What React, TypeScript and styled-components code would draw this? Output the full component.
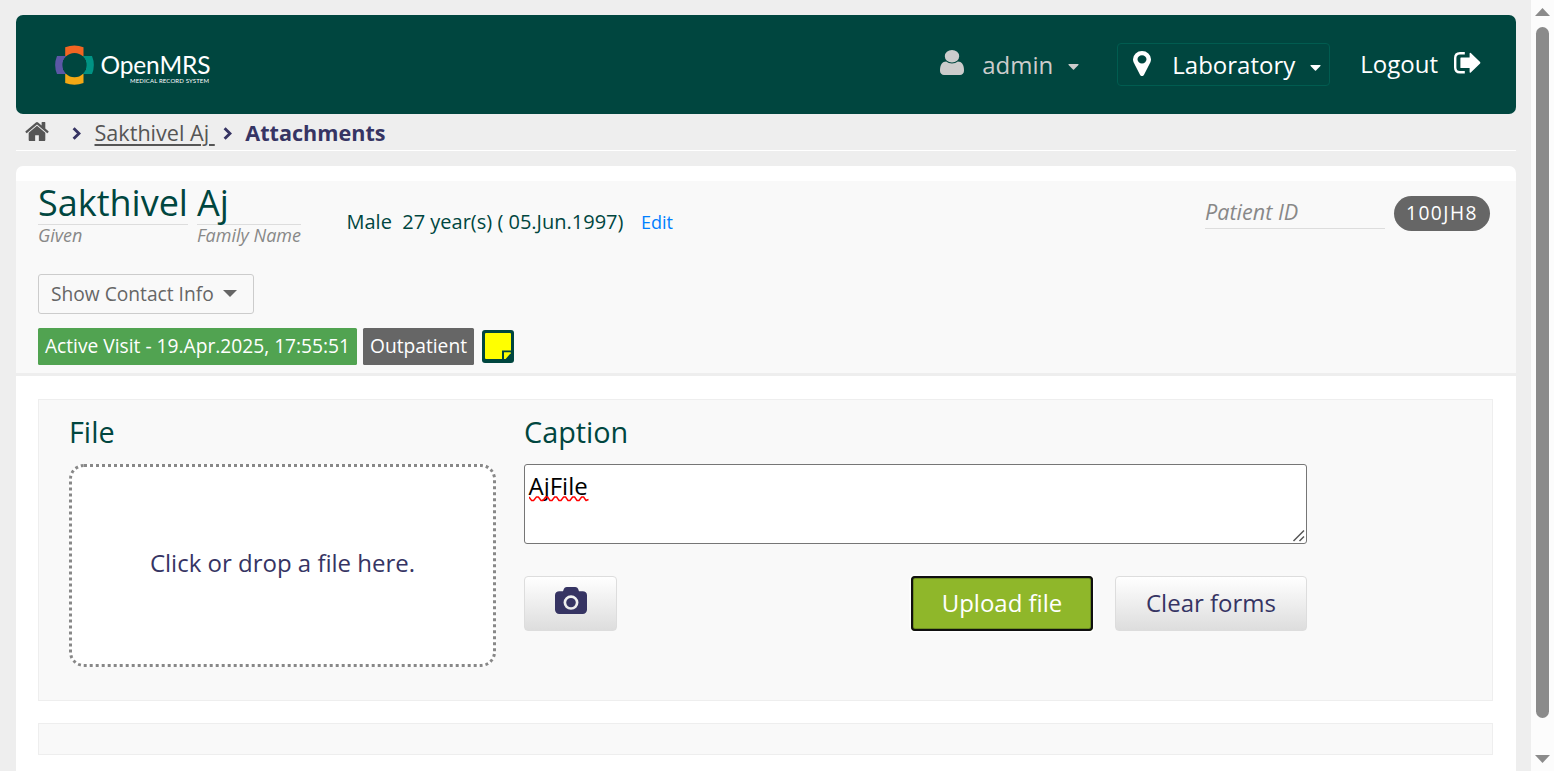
import React from "react";
import styled, { createGlobalStyle } from "styled-components";

const GlobalStyle = createGlobalStyle`
  * { box-sizing: border-box; }
  html, body { margin: 0; padding: 0; height: 100%; overflow: hidden; }
  body {
    background: #eeeeee;
    font-family: "Open Sans", "Noto Sans", sans-serif;
    font-size: 24px;
    line-height: 33px;
    color: #363463;
  }
`;

const Viewport = styled.div`
  display: flex;
  height: 771px;
  width: 1554px;
  overflow: hidden;
`;

const Page = styled.div`
  flex: 1;
  padding: 15px 15px 0 16px;
  display: flex;
  flex-direction: column;
  overflow: hidden;
`;

const Header = styled.header`
  flex: none;
  height: 99px;
  border-radius: 7px;
  background: #00463f;
  display: flex;
  align-items: flex-start;
  padding: 28px 35px 0 38px;
  color: #fff;
`;

const LogoSvg = styled.svg`
  display: block;
  margin-right: auto;
`;

const UserMenu = styled.div`
  display: flex;
  align-items: center;
  height: 43px;
  color: #cccccc;
  padding-right: 38px;
`;

const LocationMenu = styled.div`
  display: flex;
  align-items: center;
  width: 213px;
  height: 43px;
  border: 1px solid #015c50;
  border-radius: 4px;
  padding: 0 8px 0 15px;
`;

const LogoutLink = styled.div`
  display: flex;
  align-items: center;
  height: 41px;
  margin-left: 30px;
  white-space: nowrap;
`;

const NavLabel = styled.span<{ $left?: number; $right?: number }>`
  margin-left: ${(p) => p.$left ?? 0}px;
  margin-right: ${(p) => p.$right ?? 0}px;
`;

const Icon = styled.svg<{ $lift?: number; $color?: string }>`
  display: block;
  flex: none;
  fill: ${(p) => p.$color ?? "currentColor"};
  margin-bottom: ${(p) => p.$lift ?? 0}px;
`;

const Caret = styled.i<{ $size: number; $drop?: number }>`
  width: 0;
  height: 0;
  border-left: ${(p) => p.$size}px solid transparent;
  border-right: ${(p) => p.$size}px solid transparent;
  border-top: ${(p) => p.$size}px solid currentColor;
  margin-top: ${(p) => p.$drop ?? 0}px;
`;

const MenuCaret = styled.svg<{ $drop: number }>`
  display: block;
  flex: none;
  fill: currentColor;
  margin-top: ${(p) => p.$drop}px;
`;

const Breadcrumbs = styled.nav`
  flex: none;
  height: 37px;
  display: flex;
  align-items: center;
  border-bottom: 1px solid #fff;
  padding: 1px 0 0 9px;
  font-size: 21.6px;
  color: #363463;
`;

const CrumbChevron = styled.svg<{ $left?: number }>`
  display: block;
  flex: none;
  margin: 2px 0 0 ${(p) => p.$left ?? 0}px;
  fill: none;
  stroke: currentColor;
  stroke-width: 2.9;
`;

const CrumbLink = styled.a`
  color: #555555;
  text-decoration: underline;
  text-decoration-thickness: 1.5px;
  text-underline-offset: 3px;
  white-space: pre;
  margin: 0 8.5px 0 13.5px;
`;

const CrumbCurrent = styled.b`
  margin-left: 13px;
`;

const Card = styled.main`
  flex: 1;
  margin-top: 15px;
  padding-top: 15px;
  background: #fff;
  border-radius: 7px 7px 0 0;
`;

const PatientHeader = styled.section`
  height: 195px;
  background: #f9f9f9;
  border-bottom: 3px solid #eeeeee;
  padding: 0 26px 0 22px;
  color: #00463f;
`;

const Demographics = styled.div`
  display: flex;
  height: 93px;
`;

const NamePart = styled.div`
  margin-right: 9px;
`;

const NameValue = styled.div`
  height: 44px;
  line-height: 44px;
  font-size: 36px;
  border-bottom: 1px solid #dddddd;
`;

const NameLabel = styled.div`
  font-size: 18px;
  line-height: 21px;
  font-style: italic;
  color: #888888;
`;

const Vitals = styled.div`
  margin: 24px auto 0 36.5px;
  font-size: 20px;
  white-space: pre;
`;

const EditLink = styled.a`
  margin-left: 17.5px;
  font-size: 18px;
  color: #007fff;
`;

const IdLabel = styled.div`
  width: 180px;
  height: 33px;
  line-height: 31px;
  margin: 15px 9px 0 0;
  border-bottom: 1px solid #dddddd;
  font-size: 21.6px;
  font-style: italic;
  color: #888888;
`;

const IdBadge = styled.div`
  width: 96px;
  height: 35px;
  margin-top: 15px;
  border-radius: 18px;
  background: #666666;
  color: #fff;
  font-size: 19.2px;
  line-height: 34px;
  letter-spacing: 1.5px;
  text-align: center;
`;

const ContactToggle = styled.div`
  display: flex;
  align-items: center;
  width: 216px;
  height: 40px;
  border: 1px solid #cccccc;
  border-radius: 3px;
  padding: 0 0 2px 12px;
  font-size: 19.2px;
  color: #666666;
  gap: 9px;
  white-space: nowrap;
`;

const Tags = styled.div`
  display: flex;
  margin-top: 14px;
`;

const Tag = styled.span<{ $bg: string; $width: number }>`
  width: ${(p) => p.$width}px;
  height: 37px;
  line-height: 36px;
  margin-right: 6px;
  border-radius: 1.5px;
  background: ${(p) => p.$bg};
  color: #fff;
  font-size: 19.2px;
  text-align: center;
  white-space: nowrap;
`;

const NoteIcon = styled.svg`
  display: block;
  margin: 2px 0 0 2px;
`;

const Panel = styled.section<{ $height: number; $top: number }>`
  height: ${(p) => p.$height}px;
  margin: ${(p) => p.$top}px 23px 0 22px;
  border: 1px solid #eeeeee;
  background: #f9f9f9;
  display: flex;
  padding: 12px 30px;
`;

const FileColumn = styled.div`
  width: 427px;
  margin-right: 28px;
`;

const CaptionColumn = styled.div`
  width: 783px;
`;

const Heading = styled.h3`
  margin: 0 0 13px;
  font-size: 28.8px;
  font-weight: 400;
  line-height: 39px;
  color: #00463f;
`;

const DropZone = styled.div`
  display: flex;
  align-items: center;
  justify-content: center;
  height: 203px;
  padding-bottom: 6px;
  border: 3px dotted #888888;
  border-radius: 15px;
  background: #fff;
`;

const CaptionInput = styled.div`
  position: relative;
  height: 80px;
  border: 1px solid #767676;
  border-radius: 3px;
  background: #fff;
  color: #000;
  padding: 4px 3.5px;
`;

const Misspelled = styled.svg`
  position: absolute;
  left: 3.5px;
  top: 30px;
`;

const ResizeGrip = styled.svg`
  position: absolute;
  right: 1px;
  bottom: 1px;
`;

const Actions = styled.div`
  display: flex;
  margin-top: 32px;
`;

const Button = styled.button<{ $width: number; $primary?: boolean }>`
  width: ${(p) => p.$width}px;
  height: 55px;
  padding: 0 0 2px;
  display: flex;
  align-items: center;
  justify-content: center;
  border: 1px solid ${(p) => (p.$primary ? "#6f8f21" : "#dddddd")};
  border-radius: 4px;
  background: ${(p) => (p.$primary ? "#8fb72a" : "linear-gradient(#ffffff, #dddddd)")};
  box-shadow: ${(p) => (p.$primary ? "inset 0 0 0 2px #6f8f21, 0 0 0 1.5px #ffffff" : "none")};
  outline: ${(p) => (p.$primary ? "2px solid #101010" : "none")};
  outline-offset: -2px;
  font: inherit;
  color: ${(p) => (p.$primary ? "#ffffff" : "#363463")};
`;

const ActionGroup = styled.div`
  display: flex;
  gap: 22px;
  margin-left: auto;
`;

const Scrollbar = styled.aside`
  width: 23px;
  background: #fcfcfc;
  display: flex;
  flex-direction: column;
  align-items: center;
  color: #8b8b8b;
  padding: 8px 0 8px;
`;

const Thumb = styled.div`
  width: 13px;
  height: 691px;
  margin: 11px 0 auto;
  border-radius: 7px;
  background: #8b8b8b;
`;

/* Glyph outlines use a 1792-unit em with the y axis pointing up. */
const glyphs = {
  user: { box: "0 -1408 1280 1536", d: "M1280 137q0 -109 -62.5 -187t-150.5 -78h-854q-88 0 -150.5 78t-62.5 187q0 85 8.5 160.5t31.5 152t58.5 131t94 89t134.5 34.5q131 -128 313 -128t313 128q76 0 134.5 -34.5t94 -89t58.5 -131t31.5 -152t8.5 -160.5zM1024 1024q0 -159 -112.5 -271.5t-271.5 -112.5t-271.5 112.5t-112.5 271.5t112.5 271.5t271.5 112.5t271.5 -112.5t112.5 -271.5z" },
  marker: { box: "0 -1408 1024 1536", d: "M768 896q0 106 -75 181t-181 75t-181 -75t-75 -181t75 -181t181 -75t181 75t75 181zM1024 896q0 -109 -33 -179l-364 -774q-16 -33 -47.5 -52t-67.5 -19t-67.5 19t-46.5 52l-365 774q-33 70 -33 179q0 212 150 362t362 150t362 -150t150 -362z" },
  home: { box: "0 -1283 1664 1283", d: "M1408 544v-480q0 -26 -19 -45t-45 -19h-384v384h-256v-384h-384q-26 0 -45 19t-19 45v480q0 1 .5 3t.5 3l575 474l575 -474q1 -2 1 -6zM1631 613l-62 -74q-8 -9 -21 -11h-3q-13 0 -21 7l-692 577l-692 -577q-12 -8 -24 -7q-13 2 -21 11l-62 74q-8 10 -7 23.5t11 21.5l719 599q32 26 76 26t76 -26l244 -204v195q0 14 9 23t23 9h192q14 0 23 -9t9 -23v-408l219 -182q10 -8 11 -21.5t-7 -23.5z" },
  camera: { box: "0 -1536 1920 1664", d: "M960 864q119 0 203.5 -84.5t84.5 -203.5t-84.5 -203.5t-203.5 -84.5t-203.5 84.5t-84.5 203.5t84.5 203.5t203.5 84.5zM1664 1280q106 0 181 -75t75 -181v-896q0 -106 -75 -181t-181 -75h-1408q-106 0 -181 75t-75 181v896q0 106 75 181t181 75h224l51 136q19 49 69.5 84.5t103.5 35.5h512q53 0 103.5 -35.5t69.5 -84.5l51 -136h224zM960 128q185 0 316.5 131.5t131.5 316.5t-131.5 316.5t-316.5 131.5t-316.5 -131.5t-131.5 -316.5t131.5 -316.5t316.5 -131.5z" },
};

function Glyph(props: { name: keyof typeof glyphs; w: number; h: number; lift?: number; color?: string }) {
  const g = glyphs[props.name];
  return (
    <Icon width={props.w} height={props.h} viewBox={g.box} preserveAspectRatio="none" $lift={props.lift} $color={props.color}>
      <path transform="scale(1 -1)" d={g.d} />
    </Icon>
  );
}

function SignOut() {
  return (
    <Icon width="27" height="22" viewBox="0 0 27 22" $lift={2}>
      <path d="M10.8 1.2 H6 Q1.2 1.2 1.2 6 V15.5 Q1.2 20.3 6 20.3 H10.8" fill="none" stroke="currentColor" strokeWidth="2.4" />
      <path d="M7 5.6 H15.6 V1.3 Q15.8 0.5 16.8 1.1 L26.1 10 Q26.7 10.7 26.1 11.4 L16.8 20.4 Q15.8 21 15.6 20.2 V16 H7 Q6.4 16 6.4 15.4 V6.2 Q6.4 5.6 7 5.6Z" />
    </Icon>
  );
}

function Chevron({ left }: { left?: number }) {
  return (
    <CrumbChevron width="9" height="13" viewBox="0 0 9 13" $left={left}>
      <path d="M1.6 1.2 L7 6.5 L1.6 11.8" />
    </CrumbChevron>
  );
}

function DownCaret({ drop }: { drop: number }) {
  return (
    <MenuCaret width="11" height="6" viewBox="0 0 11 6" $drop={drop}>
      <path d="M0.8 0 H10.2 Q11 0.3 10.4 1 L6 5.6 Q5.5 6 5 5.6 L0.6 1 Q0 0.3 0.8 0Z" />
    </MenuCaret>
  );
}

function Logo() {
  return (
    <LogoSvg width="160" height="44" viewBox="0 0 160 44">
      <path d="M3 13 Q-0.7 22 3 31 H13 V27 H9 V17 H13 V13Z" fill="#5b57a6" />
      <path d="M38 13 Q41.7 22 38 31 H28 V27 H32 V17 H28 V13Z" fill="#009384" />
      <path d="M11.2 13 V4.3 Q20.5 0.8 29.5 4.3 V13Z" fill="#f26522" />
      <path d="M11.2 31 V40 Q20.5 43.5 29.5 40 V31Z" fill="#f4a814" />
      <circle cx="20.5" cy="22.1" r="12.1" fill="#00463f" />
      <text x="46.5" y="31" fontFamily="Lato" fontSize="24.5" textLength="110" fill="#fff">OpenMRS</text>
      <text x="76" y="40" fontFamily="Lato" fontSize="6" fontWeight="400" textLength="79" fill="#ffffff">MEDICAL RECORD SYSTEM</text>
    </LogoSvg>
  );
}

export default function App() {
  return (
    <Viewport>
      <GlobalStyle />
      <Page>
        <Header>
          <Logo />
          <UserMenu>
            <Glyph name="user" w={24} h={25} lift={5} />
            <NavLabel $left={18} $right={15}>admin</NavLabel>
            <DownCaret drop={5} />
          </UserMenu>
          <LocationMenu>
            <Glyph name="marker" w={18} h={25} lift={2} />
            <NavLabel $left={21} $right={14.5}>Laboratory</NavLabel>
            <DownCaret drop={7} />
          </LocationMenu>
          <LogoutLink>
            <NavLabel $right={16}>Logout</NavLabel>
            <SignOut />
          </LogoutLink>
        </Header>

        <Breadcrumbs>
          <Glyph name="home" w={24} h={19} lift={3} color="#555555" />
          <Chevron left={23} />
          <CrumbLink>{"Sakthivel Aj "}</CrumbLink>
          <Chevron />
          <CrumbCurrent>Attachments</CrumbCurrent>
        </Breadcrumbs>

        <Card>
          <PatientHeader>
            <Demographics>
              <NamePart>
                <NameValue>Sakthivel</NameValue>
                <NameLabel>Given</NameLabel>
              </NamePart>
              <NamePart>
                <NameValue>Aj</NameValue>
                <NameLabel>Family Name</NameLabel>
              </NamePart>
              <Vitals>
                {"Male  27 year(s) ( 05.Jun.1997)"}
                <EditLink>Edit</EditLink>
              </Vitals>
              <IdLabel>Patient ID</IdLabel>
              <IdBadge>100JH8</IdBadge>
            </Demographics>
            <ContactToggle>
              Show Contact Info
              <Caret $size={7} />
            </ContactToggle>
            <Tags>
              <Tag $bg="#51a351" $width={319}>Active Visit - 19.Apr.2025, 17:55:51</Tag>
              <Tag $bg="#666666" $width={111}>Outpatient</Tag>
              <NoteIcon width="32" height="33" viewBox="0 0 32 33">
                <rect width="32" height="33" rx="3" fill="#00463f" />
                <rect x="3" y="3" width="26" height="26" rx="1" fill="#ffff00" />
                <path d="M20 29 V20.5 H29 V29Z" fill="#00463f" />
                <path d="M22 29 V22.3 H28.7 V23.2 L23.6 29Z" fill="#ffff00" />
              </NoteIcon>
            </Tags>
          </PatientHeader>

          <Panel $height={302} $top={23}>
            <FileColumn>
              <Heading>File</Heading>
              <DropZone>Click or drop a file here.</DropZone>
            </FileColumn>
            <CaptionColumn>
              <Heading>Caption</Heading>
              <CaptionInput>
                AjFile
                <Misspelled width="60" height="7" viewBox="0 0 60 7" fill="none" stroke="#ff0000" strokeWidth="1.4">
                  <path d="M0 2 L2.6 5.5 H4.6 L7.4 2 H9.4 L12 5.5 H14 L16.6 2 H18.6 L21 5.5 H23 L25.6 2 H27.6 L30 5.5 H32 L34.6 2 H36.6 L39 5.5 H41 L43.6 2 H45.6 L48 5.5 H50 L52.6 2 H54.6 L57 5.5 L59.5 4.5" strokeLinejoin="round" />
                </Misspelled>
                <ResizeGrip width="13" height="13" viewBox="0 0 13 13" stroke="#555" strokeWidth="1.5">
                  <path d="M1.5 12 L12 1.5 M7.5 12 L12 7.5" />
                </ResizeGrip>
              </CaptionInput>
              <Actions>
                <Button $width={93}>
                  <Glyph name="camera" w={32} h={27} lift={4} />
                </Button>
                <ActionGroup>
                  <Button $width={182} $primary>Upload file</Button>
                  <Button $width={192}>Clear forms</Button>
                </ActionGroup>
              </Actions>
            </CaptionColumn>
          </Panel>
          <Panel $height={32} $top={22} />
        </Card>
      </Page>
      <Scrollbar>
        <svg width="15" height="8" viewBox="0 0 15 8"><path d="M0 8 L7.5 0 L15 8Z" fill="#8b8b8b" /></svg>
        <Thumb />
        <svg width="15" height="8" viewBox="0 0 15 8"><path d="M0 0 L7.5 8 L15 0Z" fill="#8b8b8b" /></svg>
      </Scrollbar>
    </Viewport>
  );
}
